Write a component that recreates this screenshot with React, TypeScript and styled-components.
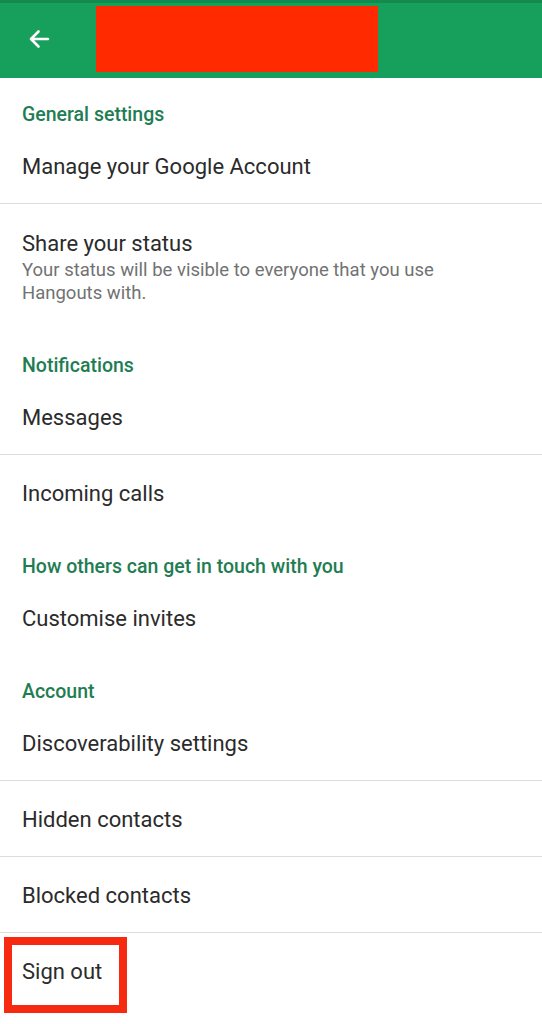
import React from 'react';
import styled, { createGlobalStyle } from 'styled-components';

const GlobalStyle = createGlobalStyle`
    html, body {
        margin: 0;
        padding: 0;
        background: #ffffff;
    }
    body {
        font-family: Roboto, "Noto Sans", "Liberation Sans", sans-serif;
        -webkit-font-smoothing: antialiased;
    }
`;

const Page = styled.div`
    width: 542px;
    min-height: 1024px;
    background: #fff;
`;

const AppBar = styled.header`
    height: 78px;
    box-sizing: border-box;
    background: #17a05c;
    border-top: 3px solid #138a4e;
    display: flex;
    align-items: center;
    padding-left: 27px;
`;

const BackButton = styled.button`
    width: 24px;
    height: 24px;
    padding: 0;
    border: none;
    background: none;
    display: flex;
    align-items: center;
    justify-content: center;
    margin-top: -3px;
`;

// title was blanked out in the screenshot
const Redacted = styled.div`
    width: 282px;
    height: 66px;
    margin-left: 45px;
    margin-top: -3px;
    background: #ff2a00;
`;

const Category = styled.div`
    height: 50px;
    box-sizing: border-box;
    padding: 26px 22px 0;
    font-size: 19.5px;
    line-height: 22px;
    font-weight: 500;
    color: #1f7d53;
`;

const Row = styled.div<{ $divider?: boolean; $tall?: boolean }>`
    position: relative;
    min-height: ${(p) => (p.$divider ? 76 : 75)}px;
    box-sizing: border-box;
    padding: ${(p) => (p.$tall ? '27px 22px 24px' : '1px 22px 0')};
    display: flex;
    flex-direction: column;
    justify-content: center;
    border-bottom: ${(p) => (p.$divider ? '1px solid #dcdcdc' : 'none')};
`;

const Title = styled.div`
    font-size: 22px;
    line-height: 25px;
    color: #2b2b2b;
`;

const Summary = styled.div`
    max-width: 445px;
    margin-top: 3px;
    font-size: 18.5px;
    line-height: 23px;
    color: #727272;
`;

const Highlight = styled.div`
    position: absolute;
    left: 4px;
    top: 4px;
    width: 123px;
    height: 76px;
    box-sizing: border-box;
    border: 8px solid #f52a10;
    pointer-events: none;
`;

type Item = {
    title: string;
    summary?: string;
    divider?: boolean;
    marked?: boolean;
};

type Section = {
    label: string;
    items: Item[];
};

const sections: Section[] = [
    {
        label: 'General settings',
        items: [
            { title: 'Manage your Google Account', divider: true },
            {
                title: 'Share your status',
                summary:
                    'Your status will be visible to everyone that you use Hangouts with.',
            },
        ],
    },
    {
        label: 'Notifications',
        items: [
            { title: 'Messages', divider: true },
            { title: 'Incoming calls' },
        ],
    },
    {
        label: 'How others can get in touch with you',
        items: [{ title: 'Customise invites' }],
    },
    {
        label: 'Account',
        items: [
            { title: 'Discoverability settings', divider: true },
            { title: 'Hidden contacts', divider: true },
            { title: 'Blocked contacts', divider: true },
            { title: 'Sign out', marked: true },
        ],
    },
];

const BackArrow = () => (
    <svg width="24" height="24" viewBox="0 0 24 24" fill="none">
        <path
            d="M21 12H4.5M11.5 4.5L4 12l7.5 7.5"
            stroke="#fff"
            strokeWidth="2.6"
            strokeLinecap="round"
            strokeLinejoin="round"
        />
    </svg>
);

const App: React.FC = () => {
    return (
        <>
            <GlobalStyle />
            <Page>
                <AppBar>
                    <BackButton aria-label="Back">
                        <BackArrow />
                    </BackButton>
                    <Redacted />
                </AppBar>
                {sections.map((section) => (
                    <section key={section.label}>
                        <Category>{section.label}</Category>
                        {section.items.map((item) => (
                            <Row
                                key={item.title}
                                $divider={item.divider}
                                $tall={!!item.summary}
                            >
                                <Title>{item.title}</Title>
                                {item.summary && (
                                    <Summary>{item.summary}</Summary>
                                )}
                                {item.marked && <Highlight />}
                            </Row>
                        ))}
                    </section>
                ))}
            </Page>
        </>
    );
};

export default App;
